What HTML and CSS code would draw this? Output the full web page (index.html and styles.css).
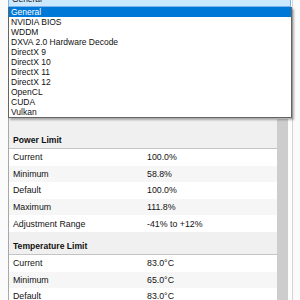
FILE: index.html
```html
<!DOCTYPE html>
<html>
<head>
<meta charset="utf-8">
<link rel="stylesheet" href="styles.css">
</head>
<body>
<div class="app">
  <div class="panel">
    <div class="table">
      <div class="group-head">Power Limit</div>
      <div class="row"><span class="label">Current</span><span class="value">100.0%</span></div>
      <div class="row alt"><span class="label">Minimum</span><span class="value">58.8%</span></div>
      <div class="row"><span class="label">Default</span><span class="value">100.0%</span></div>
      <div class="row alt"><span class="label">Maximum</span><span class="value">111.8%</span></div>
      <div class="row"><span class="label">Adjustment Range</span><span class="value">-41% to +12%</span></div>
      <div class="group-head">Temperature Limit</div>
      <div class="row"><span class="label">Current</span><span class="value">83.0°C</span></div>
      <div class="row alt"><span class="label">Minimum</span><span class="value">65.0°C</span></div>
      <div class="row"><span class="label">Default</span><span class="value">83.0°C</span></div>
    </div>
    <div class="scrollbar"></div>
    <div class="edge"></div>
  </div>

  <div class="combo">General</div>
  <ul class="dropdown">
    <li class="selected">General</li>
    <li>NVIDIA BIOS</li>
    <li>WDDM</li>
    <li>DXVA 2.0 Hardware Decode</li>
    <li>DirectX 9</li>
    <li>DirectX 10</li>
    <li>DirectX 11</li>
    <li>DirectX 12</li>
    <li>OpenCL</li>
    <li>CUDA</li>
    <li>Vulkan</li>
  </ul>
</div>
</body>
</html>
```

FILE: styles.css
```css
html, body {
  margin: 0;
  padding: 0;
  background: #fbfbfb;
  overflow: hidden;
}

.app {
  position: relative;
  width: 300px;
  height: 300px;
  font-family: "Liberation Sans", Arial, sans-serif;
  color: #111;
}

.panel {
  display: flex;
  margin-left: 8px;
  height: 300px;
  border-left: 1px solid #a8a8a8;
}

.table {
  width: 268px;
  padding-top: 126px;
  background: #f0f0f0;
}

.group-head {
  height: 23px;
  box-sizing: border-box;
  display: flex;
  align-items: flex-end;
  padding: 0 0 3px 4px;
  font-weight: bold;
  font-size: 8.6px;
  border-bottom: 1px solid #c4c4c4;
  background: #f0f0f0;
}

.row {
  display: flex;
  align-items: center;
  height: 16.6px;
  background: #ffffff;
  font-size: 8.8px;
}

.row.alt {
  background: #f6f6f6;
}

.label {
  width: 138px;
  padding-left: 4px;
  box-sizing: border-box;
}

.value {
  flex: 1;
}

.scrollbar {
  width: 11px;
  margin-top: 119px;
  background: #cdcdcd;
}

.edge {
  width: 4px;
  background: #fdfdfd;
  border-right: 1px solid #d4d4d4;
}

.combo {
  position: absolute;
  left: 8px;
  top: -8px;
  width: 283px;
  height: 15px;
  box-sizing: border-box;
  padding-left: 3px;
  background: #cce8ff;
  border: 1px solid #7eb4ea;
  font-size: 8.4px;
  line-height: 13px;
}

.dropdown {
  position: absolute;
  left: 8px;
  top: 7px;
  width: 284px;
  box-sizing: border-box;
  margin: 0;
  padding: 0;
  list-style: none;
  background: #fff;
  border: 1px solid #646464;
  border-top: none;
  box-shadow: 2px 2px 2px rgba(0, 0, 0, 0.3);
  font-size: 8.5px;
}

.dropdown li {
  height: 10px;
  line-height: 10px;
  padding-left: 2px;
  white-space: nowrap;
}

.dropdown li.selected {
  background: #0078d7;
  color: #fff;
}
```
